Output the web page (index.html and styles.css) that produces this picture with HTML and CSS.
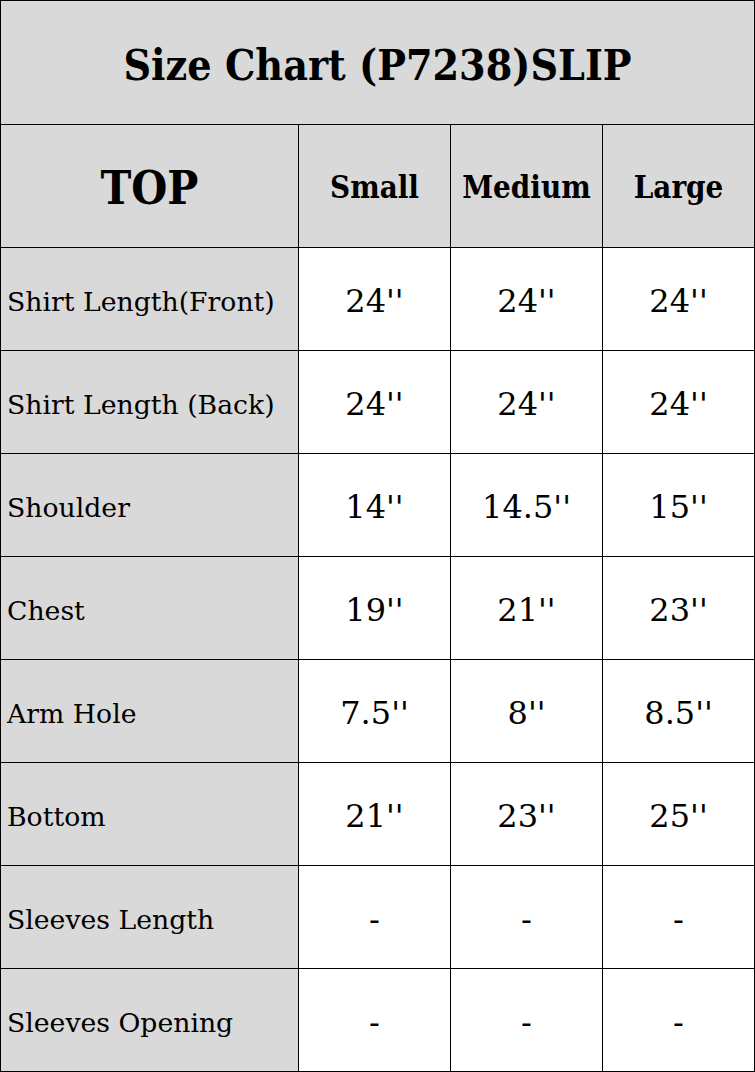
FILE: index.html
```html
<!DOCTYPE html>
<html>
<head>
<meta charset="utf-8">
<link rel="stylesheet" href="styles.css">
</head>
<body>
<table class="chart">
  <colgroup>
    <col class="c-label">
    <col class="c-size">
    <col class="c-size">
    <col class="c-size">
  </colgroup>
  <tr class="r-title"><th colspan="4" class="title">Size Chart (P7238)SLIP</th></tr>
  <tr class="r-head">
    <th class="top">TOP</th>
    <th class="size">Small</th>
    <th class="size">Medium</th>
    <th class="size">Large</th>
  </tr>
  <tr class="r-data"><td class="label">Shirt Length(Front)</td><td class="val">24''</td><td class="val">24''</td><td class="val">24''</td></tr>
  <tr class="r-data"><td class="label">Shirt Length (Back)</td><td class="val">24''</td><td class="val">24''</td><td class="val">24''</td></tr>
  <tr class="r-data"><td class="label">Shoulder</td><td class="val">14''</td><td class="val">14.5''</td><td class="val">15''</td></tr>
  <tr class="r-data"><td class="label">Chest</td><td class="val">19''</td><td class="val">21''</td><td class="val">23''</td></tr>
  <tr class="r-data"><td class="label">Arm Hole</td><td class="val">7.5''</td><td class="val">8''</td><td class="val">8.5''</td></tr>
  <tr class="r-data"><td class="label">Bottom</td><td class="val">21''</td><td class="val">23''</td><td class="val">25''</td></tr>
  <tr class="r-data"><td class="label">Sleeves Length</td><td class="val">-</td><td class="val">-</td><td class="val">-</td></tr>
  <tr class="r-data"><td class="label">Sleeves Opening</td><td class="val">-</td><td class="val">-</td><td class="val">-</td></tr>
</table>
</body>
</html>
```
FILE: styles.css
```css
html, body {
  margin: 0;
  padding: 0;
  background: #ffffff;
}
.chart {
  border-collapse: collapse;
  table-layout: fixed;
  width: 755px;
  font-family: "DejaVu Serif", "Liberation Serif", serif;
  color: #000;
}
.c-label { width: 298px; }
.c-size { width: 152px; }
.chart th, .chart td {
  border: 1px solid #000;
  padding: 0;
  vertical-align: middle;
}
.r-title { height: 124px; }
.r-head { height: 123px; }
.r-data { height: 103px; }
.chart .title {
  background: #d9d9d9;
  font-family: "DejaVu Serif Condensed", "DejaVu Serif", serif;
  font-weight: bold;
  font-size: 42.5px;
  text-align: center;
  padding-top: 4px;
}
.chart .top {
  background: #d9d9d9;
  font-family: "DejaVu Serif Condensed", "DejaVu Serif", serif;
  font-weight: bold;
  font-size: 46px;
  text-align: center;
  padding-top: 3px;
}
.chart .size {
  background: #d9d9d9;
  font-family: "DejaVu Serif Condensed", "DejaVu Serif", serif;
  font-weight: bold;
  font-size: 31px;
  text-align: center;
  padding-top: 1px;
}
.chart .label {
  background: #d9d9d9;
  font-size: 26.7px;
  text-align: left;
  padding-left: 6px;
  padding-top: 4px;
  white-space: nowrap;
}
.chart .val {
  background: #fff;
  font-size: 32px;
  text-align: center;
  padding-top: 3px;
}
```
